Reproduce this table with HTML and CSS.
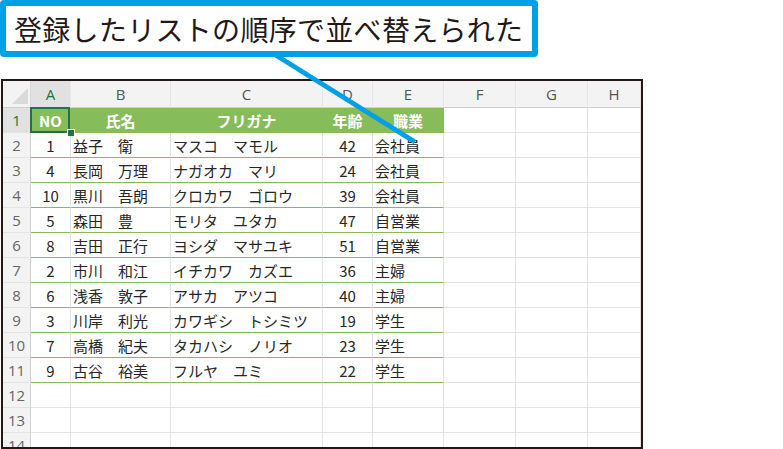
FILE: index.html
```html
<!DOCTYPE html>
<html lang="ja">
<head>
<meta charset="utf-8">
<link rel="stylesheet" href="styles.css">
</head>
<body>
<div class="callout">登録したリストの順序で並べ替えられた</div>
<div class="sheet">
  <div class="c corner"><svg class="tri" width="16" height="16" viewBox="0 0 16 16"><polygon points="16,0 16,16 0,16" fill="#dadada"/></svg></div>
  <div class="c ch sel-h">A</div><div class="c ch">B</div><div class="c ch">C</div><div class="c ch">D</div><div class="c ch">E</div><div class="c ch">F</div><div class="c ch">G</div><div class="c ch">H</div>

  <div class="c rh sel-h">1</div>
  <div class="c th a1">NO</div><div class="c th">氏名</div><div class="c th">フリガナ</div><div class="c th">年齢</div><div class="c th">職業</div><div class="c"></div><div class="c"></div><div class="c"></div>

  <div class="c rh">2</div>
  <div class="c td ctr">1</div><div class="c td lft">益子　衛</div><div class="c td lft">マスコ　マモル</div><div class="c td ctr">42</div><div class="c td lft">会社員</div><div class="c"></div><div class="c"></div><div class="c"></div>

  <div class="c rh">3</div>
  <div class="c td ctr">4</div><div class="c td lft">長岡　万理</div><div class="c td lft">ナガオカ　マリ</div><div class="c td ctr">24</div><div class="c td lft">会社員</div><div class="c"></div><div class="c"></div><div class="c"></div>

  <div class="c rh">4</div>
  <div class="c td ctr">10</div><div class="c td lft">黒川　吾朗</div><div class="c td lft">クロカワ　ゴロウ</div><div class="c td ctr">39</div><div class="c td lft">会社員</div><div class="c"></div><div class="c"></div><div class="c"></div>

  <div class="c rh">5</div>
  <div class="c td ctr">5</div><div class="c td lft">森田　豊</div><div class="c td lft">モリタ　ユタカ</div><div class="c td ctr">47</div><div class="c td lft">自営業</div><div class="c"></div><div class="c"></div><div class="c"></div>

  <div class="c rh">6</div>
  <div class="c td ctr">8</div><div class="c td lft">吉田　正行</div><div class="c td lft">ヨシダ　マサユキ</div><div class="c td ctr">51</div><div class="c td lft">自営業</div><div class="c"></div><div class="c"></div><div class="c"></div>

  <div class="c rh">7</div>
  <div class="c td ctr">2</div><div class="c td lft">市川　和江</div><div class="c td lft">イチカワ　カズエ</div><div class="c td ctr">36</div><div class="c td lft">主婦</div><div class="c"></div><div class="c"></div><div class="c"></div>

  <div class="c rh">8</div>
  <div class="c td ctr">6</div><div class="c td lft">浅香　敦子</div><div class="c td lft">アサカ　アツコ</div><div class="c td ctr">40</div><div class="c td lft">主婦</div><div class="c"></div><div class="c"></div><div class="c"></div>

  <div class="c rh">9</div>
  <div class="c td ctr">3</div><div class="c td lft">川岸　利光</div><div class="c td lft">カワギシ　トシミツ</div><div class="c td ctr">19</div><div class="c td lft">学生</div><div class="c"></div><div class="c"></div><div class="c"></div>

  <div class="c rh">10</div>
  <div class="c td ctr">7</div><div class="c td lft">高橋　紀夫</div><div class="c td lft">タカハシ　ノリオ</div><div class="c td ctr">23</div><div class="c td lft">学生</div><div class="c"></div><div class="c"></div><div class="c"></div>

  <div class="c rh">11</div>
  <div class="c td ctr">9</div><div class="c td lft">古谷　裕美</div><div class="c td lft">フルヤ　ユミ</div><div class="c td ctr">22</div><div class="c td lft">学生</div><div class="c"></div><div class="c"></div><div class="c"></div>

  <div class="c rh">12</div>
  <div class="c"></div><div class="c"></div><div class="c"></div><div class="c"></div><div class="c"></div><div class="c"></div><div class="c"></div><div class="c"></div>

  <div class="c rh">13</div>
  <div class="c"></div><div class="c"></div><div class="c"></div><div class="c"></div><div class="c"></div><div class="c"></div><div class="c"></div><div class="c"></div>

  <div class="c rh">14</div>
  <div class="c"></div><div class="c"></div><div class="c"></div><div class="c"></div><div class="c"></div><div class="c"></div><div class="c"></div><div class="c"></div>
</div>
<svg class="pointer" width="783" height="449" viewBox="0 0 783 449"><line x1="274" y1="54" x2="415" y2="142" stroke="#00a0e9" stroke-width="5"/></svg>
</body>
</html>
```
FILE: styles.css
```css
html, body {
  margin: 0;
  background: #fff;
}
body {
  position: relative;
  width: 783px;
  height: 449px;
  overflow: hidden;
  font-family: "Noto Sans CJK JP", sans-serif;
}
.callout {
  width: 538px;
  height: 57px;
  box-sizing: border-box;
  border: 6px solid #00a0e9;
  border-radius: 4px;
  display: flex;
  align-items: center;
  padding-left: 8px;
  font-size: 28px;
  letter-spacing: 0.3px;
  line-height: 1;
  color: #231815;
  white-space: nowrap;
}
.sheet {
  margin: 22px 0 0 1px;
  width: 642px;
  height: 370px;
  box-sizing: border-box;
  border: 2px solid #231815;
  display: grid;
  grid-template-columns: 28px 40px 100px 152px 50px 71px 72px 72px 1fr;
  grid-template-rows: 27px repeat(14, 25px);
  overflow: hidden;
  font-size: 15px;
  color: #262626;
}
.c {
  box-sizing: border-box;
  border-right: 1px solid #e3e3e3;
  border-bottom: 1px solid #e3e3e3;
  display: flex;
  align-items: center;
  white-space: nowrap;
  overflow: hidden;
  line-height: 1;
}
.corner {
  background: #f3f3f3;
  justify-content: flex-end;
  align-items: flex-end;
  padding: 0 2px 3px 0;
  border-bottom-color: #cfcfcf;
  border-right-color: #d6d6d6;
}
.ch {
  background: #f3f3f3;
  justify-content: center;
  color: #555;
  font-family: "Open Sans", sans-serif;
  font-size: 15px;
  border-bottom-color: #cfcfcf;
  border-right-color: #e6e6e6;
}
.rh {
  background: #f3f3f3;
  justify-content: center;
  color: #666;
  font-family: "Open Sans", sans-serif;
  font-size: 15px;
  border-right-color: #d2d2d2;
  border-bottom-color: #e3e3e3;
}
.sel-h {
  background: #e1e1e1;
  color: #217346;
}
.th {
  background: #87bc5b;
  color: #fff;
  font-weight: bold;
  justify-content: center;
  border-right-color: #87bc5b;
  border-bottom-color: #87bc5b;
}
.td {
  border-bottom-color: #86bb5a;
}
.ctr {
  justify-content: center;
}
.lft {
  padding-left: 2px;
}
.a1 {
  position: relative;
  overflow: visible;
}
.a1::after {
  content: "";
  position: absolute;
  left: -1px;
  top: -1px;
  right: 0;
  bottom: -1px;
  border: 2px solid #217346;
}
.a1::before {
  content: "";
  position: absolute;
  right: -5px;
  bottom: -5px;
  width: 6px;
  height: 6px;
  background: #217346;
  border: 1px solid #fff;
  z-index: 2;
}
.pointer {
  position: absolute;
  left: 0;
  top: 0;
  pointer-events: none;
}
```
